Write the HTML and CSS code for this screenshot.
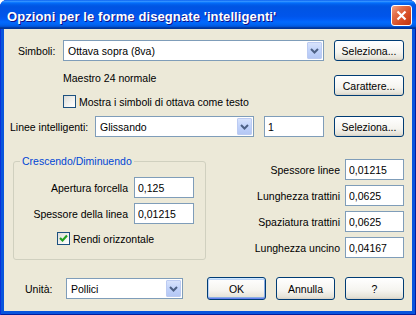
FILE: index.html
```html
<!DOCTYPE html>
<html lang="it">
<head>
    <meta charset="UTF-8">
    <title>Opzioni per le forme disegnate 'intelligenti'</title>
    <link rel="stylesheet" href="styles.css">
</head>
<body>
    <div class="window">
        <div class="titlebar">
            <span class="title">Opzioni per le forme disegnate 'intelligenti'</span>
            <span class="close-btn">
                <svg width="11" height="11" viewBox="0 0 11 11"><path d="M1.5 1.5 L9.5 9.5 M9.5 1.5 L1.5 9.5" stroke="#fff" stroke-width="2.2" fill="none"/></svg>
            </span>
        </div>

        <div class="client">
            <div class="row row-symbols">
                <span class="label lbl-symbols">Simboli:</span>
                <div class="combo combo-symbols">
                    <span class="combo-text">Ottava sopra (8va)</span>
                    <span class="combo-btn"><svg width="9" height="6" viewBox="0 0 9 6"><polyline points="1,1 4.5,4.5 8,1" stroke="#4d6185" stroke-width="2" fill="none"/></svg></span>
                </div>
                <button class="btn btn-side">Seleziona...</button>
            </div>

            <div class="row row-font">
                <div class="font-info">
                    <div class="font-name">Maestro 24 normale</div>
                    <label class="check">
                        <span class="box"></span>
                        <span>Mostra i simboli di ottava come testo</span>
                    </label>
                </div>
                <button class="btn btn-side btn-font">Carattere...</button>
            </div>

            <div class="row row-lines">
                <span class="label lbl-lines">Linee intelligenti:</span>
                <div class="combo combo-lines">
                    <span class="combo-text">Glissando</span>
                    <span class="combo-btn"><svg width="9" height="6" viewBox="0 0 9 6"><polyline points="1,1 4.5,4.5 8,1" stroke="#4d6185" stroke-width="2" fill="none"/></svg></span>
                </div>
                <input class="edit edit-count" type="text" value="1">
                <button class="btn btn-side">Seleziona...</button>
            </div>

            <div class="middle">
                <fieldset class="group">
                    <legend>Crescendo/Diminuendo</legend>
                    <div class="field field-first">
                        <span>Apertura forcella</span>
                        <input class="edit edit-group" type="text" value="0,125">
                    </div>
                    <div class="field field-next">
                        <span>Spessore della linea</span>
                        <input class="edit edit-group" type="text" value="0,01215">
                    </div>
                    <label class="check check-group">
                        <span class="box">
                            <svg width="11" height="11" viewBox="0 0 11 11"><polyline points="2,5 4.5,7.5 9,2.5" stroke="#21a121" stroke-width="2.2" fill="none"/></svg>
                        </span>
                        <span>Rendi orizzontale</span>
                    </label>
                </fieldset>

                <div class="params">
                    <div class="field">
                        <span>Spessore linee</span>
                        <input class="edit edit-param" type="text" value="0,01215">
                    </div>
                    <div class="field">
                        <span>Lunghezza trattini</span>
                        <input class="edit edit-param" type="text" value="0,0625">
                    </div>
                    <div class="field">
                        <span>Spaziatura trattini</span>
                        <input class="edit edit-param" type="text" value="0,0625">
                    </div>
                    <div class="field">
                        <span>Lunghezza uncino</span>
                        <input class="edit edit-param" type="text" value="0,04167">
                    </div>
                </div>
            </div>

            <div class="row row-bottom">
                <span class="label lbl-units">Unità:</span>
                <div class="combo combo-units">
                    <span class="combo-text">Pollici</span>
                    <span class="combo-btn"><svg width="9" height="6" viewBox="0 0 9 6"><polyline points="1,1 4.5,4.5 8,1" stroke="#4d6185" stroke-width="2" fill="none"/></svg></span>
                </div>
                <button class="btn btn-action btn-default">OK</button>
                <button class="btn btn-action">Annulla</button>
                <button class="btn btn-action">?</button>
            </div>
        </div>
    </div>
</body>
</html>
```

FILE: styles.css
```css
* {
    box-sizing: border-box;
}
body {
    margin: 0;
    background: #ffffff;
    font-family: "Liberation Sans", Arial, sans-serif;
    font-size: 10.5px;
    color: #000;
}
.window {
    width: 416px;
    height: 315px;
    display: flex;
    flex-direction: column;
    background: #0855dd;
    border-radius: 7px 7px 0 0;
    box-shadow: inset 1px 0 #0831d9, inset -1px 0 #001ea0, inset 0 -1px #001ea0;
}
.titlebar {
    height: 29px;
    display: flex;
    align-items: center;
    justify-content: space-between;
    padding: 4px 4px 0 7px;
    border-radius: 7px 7px 0 0;
    background: linear-gradient(to bottom, #0058ee 0%, #3a93ff 4%, #288eff 6%, #127dff 8%, #036ffc 10%, #0262ee 14%, #0057e5 20%, #0054e3 24%, #0055eb 56%, #005bf5 66%, #026afe 76%, #0062ef 86%, #0052d6 92%, #0040ab 94%, #003092 100%);
}
.title {
    color: #fff;
    font-weight: bold;
    font-size: 13px;
    letter-spacing: 0.1px;
    text-shadow: 1px 1px #0f1089;
}
.close-btn {
    width: 21px;
    height: 21px;
    align-self: flex-start;
    margin-top: 1px;
    display: flex;
    align-items: center;
    justify-content: center;
    border: 1px solid #fff;
    border-radius: 3px;
    background: linear-gradient(135deg, #f4a488 0%, #e3704b 30%, #d64b22 65%, #c1350f 100%);
}
.client {
    flex: 1;
    margin: 0 4px 4px;
    padding: 11px 8px 0 0;
    background: #ece9d8;
    display: flex;
    flex-direction: column;
}
.row {
    display: flex;
    align-items: center;
}

/* controls */
.combo {
    height: 21px;
    display: flex;
    align-items: center;
    border: 1px solid #7f9db9;
    background: #fff;
}
.combo-text {
    flex: 1;
    padding-left: 4px;
    white-space: nowrap;
}
.combo-btn {
    width: 15px;
    height: 17px;
    margin-right: 1px;
    display: flex;
    align-items: center;
    justify-content: center;
    border: 1px solid #bccbf2;
    border-radius: 1px;
    background: linear-gradient(to bottom, #d8e3fc 0%, #c1d3fb 50%, #b4c7f4 100%);
}
.edit {
    height: 21px;
    padding: 0 3px;
    border: 1px solid #7f9db9;
    background: #fff;
    font: inherit;
    color: #000;
    outline: none;
}
.btn {
    height: 21px;
    padding: 0;
    border: 1px solid #003c74;
    border-radius: 3px;
    background: linear-gradient(to bottom, #ffffff 0%, #f5f4ef 60%, #e6e3d8 90%, #d6d0c5 100%);
    font: inherit;
    color: #000;
}
.btn-default {
    box-shadow: inset 0 1px #cee7ff, inset 0 -1px #6982ee, inset 1px 0 #b8d3f8, inset -1px 0 #8aace3, inset 0 2px #bcd4f6, inset 0 -2px #89ade4;
}
.check {
    display: flex;
    align-items: center;
    gap: 3px;
    height: 13px;
}
.box {
    width: 13px;
    height: 13px;
    display: flex;
    align-items: center;
    justify-content: center;
    border: 1px solid #1c5180;
    background: linear-gradient(135deg, #dcdcd7 0%, #f4f4f1 60%, #ffffff 100%);
}

/* rows */
.row-symbols {
    padding-left: 14px;
}
.lbl-symbols {
    width: 45px;
}
.combo-symbols {
    width: 261px;
}
.btn-side {
    width: 70px;
    margin-left: 10px;
}
.row-font {
    margin-top: 10px;
    padding-left: 59px;
    align-items: flex-start;
}
.font-info {
    flex: 1;
}
.font-name {
    line-height: 14px;
}
.font-info .check {
    margin-top: 10px;
}
.btn-font {
    margin-top: 4px;
}
.row-lines {
    margin-top: 8px;
    padding-left: 6px;
}
.lbl-lines {
    width: 85px;
}
.combo-lines {
    width: 159px;
}
.edit-count {
    width: 60px;
    margin-left: 10px;
}

/* group + parameters */
.middle {
    display: flex;
    justify-content: space-between;
    align-items: flex-start;
    margin-top: 18px;
    padding-left: 9px;
}
.group {
    width: 193px;
    min-width: 0;
    margin: 0;
    padding: 0 11px 14px 0;
    border: 1px solid #d0d0bf;
    border-radius: 3px;
}
.group legend {
    margin-left: 6px;
    padding: 0 2px;
    line-height: 13px;
    color: #0046d5;
}
.field {
    display: flex;
    justify-content: flex-end;
    align-items: center;
    gap: 6px;
}
.field-first {
    margin-top: 9px;
}
.field-next {
    margin-top: 5px;
}
.edit-group {
    width: 60px;
}
.check-group {
    margin-top: 8px;
    padding-left: 43px;
}
.params {
    display: flex;
    flex-direction: column;
    gap: 5px;
    padding-top: 4px;
}
.params .field {
    gap: 5px;
}
.edit-param {
    width: 59px;
}

/* bottom */
.row-bottom {
    margin-top: 17px;
    padding-left: 21px;
}
.lbl-units {
    width: 41px;
}
.combo-units {
    width: 117px;
}
.btn-action {
    width: 59px;
    height: 23px;
    margin-left: 10px;
}
.btn-default {
    margin-left: 24px;
}
```
